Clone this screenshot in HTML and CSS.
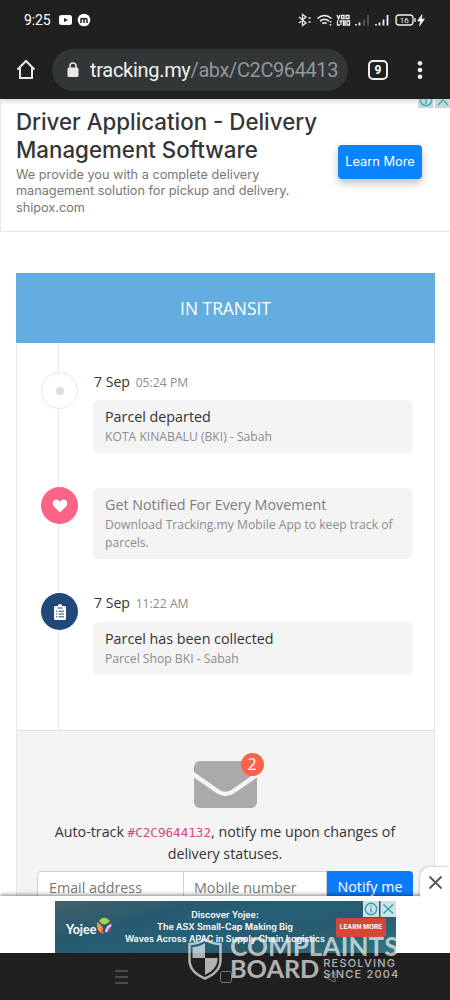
FILE: index.html
```
<!DOCTYPE html>
<html lang="en">
<head>
<meta charset="utf-8">
<title>Parcel tracking</title>
<link rel="stylesheet" href="styles.css">
</head>
<body>
<div class="phone">
  <header class="chrome">
    <div class="status">
      <span class="clock">9:25</span>
      <svg class="status-left" width="34" height="14" viewBox="0 0 34 14"><rect x="1" y="2" width="13" height="10" rx="2.5" fill="#fff"/><path d="M6 5l4 2-4 2z" fill="#202020"/><circle cx="26" cy="7" r="6.3" fill="#fff"/><path d="M23 10V5.300M23 7q0-1.500 1.500-1.500T26 7v3M26 7q0-1.500 1.500-1.500T29 7v3" fill="none" stroke="#202020" stroke-width="1.500"/></svg>
      <svg class="status-right" width="130" height="16" viewBox="0 0 130 16" fill="none" stroke="#eee" stroke-width="1.300">
        <path d="M1 5l7 6-3.500 2.500v-11L8 5l-7 6M10.500 6h2M10.500 10h2"/>
        <path d="M19.500 6.500q7-6 14 0M22 9q4.500-3.500 9 0M24.300 11.500q2.200-1.500 4.400 0M32.500 9v1.500M32.500 12v1.500" stroke-width="1.600"/>
        <path d="M39 3l1.500 4L42 3M43.500 3.500h2.500v3h-2.500zM48 3.500h3v3h-3zM39.500 8.500v4.500H42M41.500 9h3M43 9v4M48 9h-2.500v4H48M46 11h2M49 9h2.500v4H49z"/>
        <path d="M58 12v1.500M61.500 10.500v3" stroke-width="1.800"/><path d="M66 7.500v6M70 3v10.500" stroke="#555" stroke-width="1.800"/>
        <path d="M78 12v1.500M81.500 10.500v3M85.500 7.500v6M89.500 3v10.500" stroke-width="1.800"/>
        <rect x="98" y="3" width="17" height="10" rx="3"/><path d="M117 6v4"/><path d="M98.500 6v4" stroke="#cfc96a"/>
        <path d="M124 2.500l-4.500 6.500h3l-1 5 5-7h-3z" fill="#fff" stroke="#fff" stroke-width=".5"/>
        <text x="101.800" y="11" class="battery">16</text>
      </svg>
    </div>
    <div class="toolbar">
      <svg class="home" width="20" height="21" viewBox="0 0 20 21"><path d="M1.500 10.500L10 2l8.500 8.500M4 9v10h12V9" fill="none" stroke="#e8e8e8" stroke-width="2"/></svg>
      <div class="address">
        <svg width="12" height="16" viewBox="0 0 12 16"><rect x="0.500" y="5.500" width="11" height="9.500" rx="1.500" fill="#e4e6e8"/><path d="M3 6V4a3 3 0 0 1 6 0v2" fill="none" stroke="#e4e6e8" stroke-width="1.500"/></svg>
        <span class="url">tracking.my<span class="path">/abx/C2C9644132</span></span>
      </div>
      <span class="tabs">9</span>
      <svg class="dots" width="6" height="20" viewBox="0 0 6 20" fill="#eee"><circle cx="3" cy="3.200" r="2.300"/><circle cx="3" cy="10" r="2.300"/><circle cx="3" cy="16.800" r="2.300"/></svg>
    </div>
  </header>

  <main class="page">
    <section class="top-ad">
      <div class="ad-copy">
        <h2 class="ad-title">Driver Application - Delivery<br>Management Software</h2>
        <p class="ad-text">We provide you with a complete delivery<br>management solution for pickup and delivery.<br>shipox.com</p>
      </div>
      <span class="ad-button">Learn More</span>
      <svg class="ad-marks top-marks" width="32" height="9" viewBox="0 0 32 9"><path d="M0 0h15.500v9H0zM17 0h15v9H17z" fill="#cdd3d6"/><path d="M2.500 0a5.500 5.500 0 0 0 11 2V0M8 0v5M20 6l5-5 5 5" fill="none" stroke="#2ab0bd" stroke-width="1.400"/></svg>
    </section>

    <section class="tracking">
      <h1 class="banner">IN TRANSIT</h1>
      <div class="timeline">
        <div class="event first">
          <span class="marker plain"></span>
          <div class="event-body">
            <p class="when">7 Sep <span>05:24 PM</span></p>
            <div class="box"><p class="what">Parcel departed</p><p class="where">KOTA KINABALU (BKI) - Sabah</p></div>
          </div>
        </div>
        <div class="event promo">
          <span class="marker pink"><svg width="16" height="14" viewBox="0 0 18 16"><path d="M9 15.500L2 8.500C-1.500 4 3-1.500 7.300 1.500L9 3.200l1.700-1.700C15-1.500 19.500 4 16 8.500z" fill="#fff"/></svg></span>
          <div class="event-body">
            <div class="box tall"><p class="what muted">Get Notified For Every Movement</p><p class="where">Download Tracking.my Mobile App to keep track of parcels.</p></div>
          </div>
        </div>
        <div class="event">
          <span class="marker navy"><svg width="12" height="16" viewBox="0 0 12 16"><path d="M1.500 2H4a2 2 0 0 1 4 0h2.500Q12 2 12 3.500v11q0 1.500-1.500 1.500h-9Q0 16 0 14.500v-11Q0 2 1.500 2z" fill="#fff"/><path d="M3.500 4h5M2 7.200h1.300M4.700 7.200H10M2 10h1.300M4.700 10H10M2 12.800h1.300M4.700 12.800H10" stroke="#20497a" stroke-width="1"/></svg></span>
          <div class="event-body">
            <p class="when">7 Sep <span>11:22 AM</span></p>
            <div class="box"><p class="what">Parcel has been collected</p><p class="where">Parcel Shop BKI - Sabah</p></div>
          </div>
        </div>
      </div>
      <div class="notify">
        <div class="envelope">
          <svg width="63" height="47" viewBox="0 0 63 47"><rect width="63" height="47" rx="6" fill="#aaa"/><path d="M-1 13L24 30.500q7.500 5 15 0L64 13" fill="none" stroke="#f4f4f4" stroke-width="4.500"/></svg>
          <span class="count">2</span>
        </div>
        <p class="auto">Auto-track <code>#C2C9644132</code>, notify me upon changes of<br>delivery statuses.</p>
        <div class="form"><span class="field">Email address</span><span class="field second">Mobile number</span><span class="submit">Notify me</span></div>
      </div>
    </section>
  </main>

  <aside class="bottom-ad">
    <span class="close"><svg width="15" height="15" viewBox="0 0 15 15"><path d="M1.500 1.500l12 12M13.500 1.500l-12 12" stroke="#555" stroke-width="1.800"/></svg></span>
    <div class="yojee">
      <div class="brand"><span>Yojee</span>
        <svg width="17" height="20" viewBox="0 0 17 20"><path d="M3 5q5-7 11 0-6 7-11 0z" fill="#a6cf4e"/><path d="M1 6q7 3 6 12Q0 15 1 6z" fill="#f49b38"/><path d="M16 7q-7 2-7 10 7-1 7-10z" fill="#a34aa7"/><path d="M15 9q-4 2-5 7" stroke="#e7d5f5" stroke-width="2" fill="none"/><path d="M8 18l-3-2 1-4z" fill="#ee4167"/></svg>
      </div>
      <p class="pitch">Discover Yojee:<br>The ASX Small-Cap Making Big<br>Waves Across APAC in Supply Chain Logistics</p>
      <span class="learn">LEARN MORE</span>
      <svg class="ad-marks" width="33" height="16" viewBox="0 0 33 16"><path d="M0 0h16v16H0zM17.500 0H33v16H17.500z" fill="#d3dfe2"/><g fill="none" stroke="#22aab8" stroke-width="1.400"><circle cx="8" cy="8" r="5.700"/><path d="M8 7v4.500M8 4.300v1.400M20.500 3.500l9.500 9M30 3.500l-9.500 9"/></g></svg>
    </div>
  </aside>

  <nav class="system">
    <svg width="14" height="14" viewBox="0 0 14 14"><path d="M0 1h13M0 7h13M0 13h13" stroke="#777" stroke-width="1"/></svg>
    <svg width="12" height="12" viewBox="0 0 12 12"><rect x="0.500" y="0.500" width="11" height="11" rx="2" fill="none" stroke="#777"/></svg>
    <svg width="14" height="14" viewBox="0 0 14 14"><path d="M12 2v10L1.500 7z" fill="none" stroke="#777"/></svg>
  </nav>

  <div class="watermark">
    <svg width="34" height="42" viewBox="0 0 34 42"><path d="M17 1.500Q24 6 32.500 6v16q0 12-15.500 18.500Q1.500 34 1.500 22V6Q10 6 17 1.500z" fill="none" stroke="#fff" stroke-width="2.500"/><path d="M17 5v15h12.500v3Q28 32 17 37V20H4.500V9Q11 9 17 5z" fill="#fff"/></svg>
    <div class="wm-words">
      <span class="wm-one">COMPLAINTS</span>
      <div class="wm-row"><span class="wm-two">BOARD</span><span class="wm-small">RESOLVING<br>SINCE 2004</span></div>
    </div>
  </div>
</div>
</body>
</html>
```
FILE: styles.css
```
* { box-sizing: border-box; }
body, p, h1, h2 { margin: 0; }
body { background: #fff; font-family: "Open Sans", sans-serif; }
svg { display: block; flex: none; }
.phone { position: relative; width: 450px; height: 1000px; overflow: hidden; display: flex; flex-direction: column; white-space: nowrap; }

.chrome { flex: none; height: 99px; background: #202020; color: #fff; }
.status { height: 40px; display: flex; align-items: center; padding: 0 22px 0 24px; }
.clock { width: 34px; font: 14px/16px Roboto, sans-serif; letter-spacing: -0.1px; }
.status-right { margin-left: auto; }
.battery { font: 8px Roboto, sans-serif; fill: #eee; stroke: none; }
.toolbar { height: 59px; display: flex; align-items: center; padding: 0 0 0 16px; }
.address { margin-left: 16px; width: 296px; height: 42px; border-radius: 21px; background: #323637; display: flex; align-items: center; padding: 0 8px 0 15px; gap: 11px; }
.url { width: 249px; overflow: hidden; font: 20px/26px Roboto, sans-serif; letter-spacing: -0.3px; color: #f1f1f1; }
.path { color: #92979a; letter-spacing: -0.4px; }
.tabs { margin-left: 20px; width: 20px; height: 20px; border: 2px solid #eee; border-radius: 5px; font: 700 12px/16px Roboto, sans-serif; text-align: center; }
.dots { margin-left: 29px; }

.page { flex: none; height: 797px; overflow: hidden; background: #fff; }
.top-ad { position: relative; height: 133px; display: flex; justify-content: space-between; padding: 9px 28px 0 16px; border-left: 1px solid #e6e6e6; border-bottom: 1px solid #e8e8e8; background: linear-gradient(#dedede, #fff 6px); }
.ad-title { font: 500 22.300px/28px Inter, sans-serif; color: #353535; }
.ad-text { margin-top: 3px; font: 12.700px/16.400px Inter, sans-serif; color: #777; }
.ad-copy { margin-left: -1px; }
.ad-button { margin-top: 37px; width: 84px; height: 34px; border-radius: 4px; background: #0a84ff; box-shadow: 0 4px 9px rgba(0,0,0,.25); color: #fff; font: 12.800px/33px Inter, sans-serif; text-align: center; }
.ad-marks { position: absolute; right: 0; top: 0; }

.tracking { margin: 41px 15px 0 16px; border: 1px solid #e6e6e6; border-top: 0; }
.banner { height: 70px; margin: 0 -1px; background: #64ade0; color: #fff; font-size: 17.400px; font-weight: 400; line-height: 71px; text-align: center; }
.timeline { height: 387px; padding: 29px 21px 0 24px; background: linear-gradient(#e9e9e9, #e9e9e9) 41px 0 / 1px 100% no-repeat; }
.event { display: flex; gap: 15px; height: 116px; }
.promo { height: 105px; }
.marker { flex: none; width: 37px; height: 37px; border-radius: 50%; display: flex; align-items: center; justify-content: center; }
.plain { background: #fff; border: 1px solid #e8e8e8; }
.plain::after { content: ""; width: 8px; height: 8px; border-radius: 50%; background: #ddd; }
.pink { background: #fc6487; margin-top: -1px; }
.navy { background: #20497a; }
.event-body { flex: 1; }
.when { height: 28px; font-size: 14.100px; line-height: 20px; color: #333; padding-left: 1px; }
.when span { font-size: 12.200px; color: #8c8c8c; margin-left: 2px; }
.box { height: 53px; border-radius: 6px; background: #f4f4f4; padding: 7px 12px 0; }
.event:last-child .box { margin-top: 1px; }
.tall { height: 71px; }
.what { font-size: 14.300px; line-height: 20px; color: #333; }
.muted { color: #7d7d7d; }
.where { font-size: 12.150px; line-height: 18px; color: #8c8c8c; white-space: normal; margin-top: 1px; }

.notify { height: 200px; background: #f4f4f4; border-top: 1px solid #e0e0e0; padding: 30px 21px 0 20px; }
.envelope { position: relative; width: 63px; margin: 0 auto; }
.count { position: absolute; right: -7px; top: -8px; width: 23px; height: 23px; border-radius: 50%; background: #f9624b; color: #fff; font-size: 16px; line-height: 23px; text-align: center; }
.auto { margin-top: 13px; font-size: 14.250px; line-height: 21.500px; color: #333; text-align: center; }
.auto code { font: 12.600px "DejaVu Sans Mono", monospace; color: #da4683; }
.form { display: flex; margin-top: 7px; height: 35px; font-size: 14.300px; line-height: 32px; color: #777; }
.field { width: 147px; padding-left: 11px; background: #fff; border: 1px solid #d0d0d0; border-radius: 4px 0 0 4px; }
.second { width: 144px; margin-left: -1px; padding-left: 10px; border-radius: 0; }
.submit { flex: 1; background: #0a7cfb; color: #fff; text-align: center; border-radius: 0 4px 4px 0; }

.bottom-ad { position: relative; flex: none; height: 57px; background: #fff; box-shadow: 0 -1px 4px rgba(0,0,0,.5); padding: 5px 54px 0 55px; }
.close { position: absolute; right: 0; top: -29px; width: 30px; height: 31px; border-radius: 10px 0 0 0; background: #fff; padding: 8px; box-shadow: -1px -1px 2px rgba(0,0,0,.15); }
.yojee { position: relative; height: 52px; display: flex; color: #fff; background: linear-gradient(165deg, #45616a 0%, #275a70 28%, #246078 50%, #285b6d 70%, #327781 100%); }
.brand { width: 62px; display: flex; padding: 15px 0 0 11px; }
.brand span { font: 700 12.500px/27px Lato, sans-serif; }
.pitch { width: 216px; padding-top: 8px; font: 600 9px/11.800px Inter, sans-serif; text-align: center; }
.learn { margin: 17px 0 0 3px; width: 50px; height: 19px; border-radius: 2px; background: #d6453a; font: 700 6.500px/19px Inter, sans-serif; text-align: center; }

.system { flex: 1; background: #202020; display: flex; gap: 91px; align-items: center; padding-left: 115px; }
.watermark { position: absolute; left: 188px; top: 938px; display: flex; gap: 8px; opacity: .65; color: #fff; }
.wm-words { font-family: Lato, sans-serif; font-weight: 700; }
.wm-one { display: block; font-size: 26px; line-height: 18px; margin-top: -1px; letter-spacing: 0.1px; }
.wm-row { display: flex; gap: 4px; margin-top: 4px; }
.wm-two { font-size: 25.200px; line-height: 18px; }
.wm-small { font: 500 11px/11px Inter, sans-serif; letter-spacing: 1.200px; margin-top: -1px; }
```
